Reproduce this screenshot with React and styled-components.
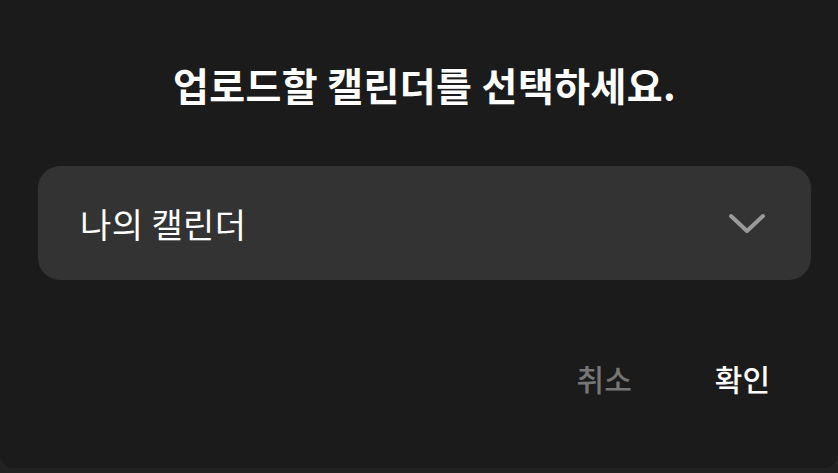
import React, { useState } from 'react'
import styled, { createGlobalStyle } from 'styled-components'

const GlobalStyle = createGlobalStyle`
  html, body { margin: 0; padding: 0; background: #222222; }
  body { font-family: "Noto Sans CJK KR", "Noto Sans", sans-serif; }
`

const Dialog = styled.div`
  height: 468px;
  box-sizing: border-box;
  background: #1b1b1b;
  border-radius: 0 0 14px 14px;
  padding: 61px 27px 0 38px;
  display: flex;
  flex-direction: column;
`

const Title = styled.h2`
  margin: 0;
  font-size: 39px;
  line-height: 46px;
  font-weight: 700;
  color: #ffffff;
  text-align: center;
  letter-spacing: 0.4px;
`

const Select = styled.button`
  margin-top: 59px;
  height: 114px;
  border: none;
  border-radius: 22px;
  background: #333333;
  display: flex;
  align-items: center;
  justify-content: space-between;
  padding: 0 44px 0 42px;
  font-family: inherit;
  font-size: 34px;
  letter-spacing: 0.4px;
  color: #ffffff;
  cursor: pointer;
`

const Actions = styled.div`
  margin-top: 78px;
  display: flex;
  justify-content: flex-end;
  gap: 43px;
  padding-right: 21px;
`

const ActionButton = styled.button`
  border: none;
  background: none;
  padding: 0 20px;
  font-family: inherit;
  font-size: 30px;
  line-height: 40px;
  font-weight: 500;
  color: ${p => (p.primary ? '#ffffff' : '#767676')};
  cursor: pointer;
`

function Chevron() {
  return (
    <svg width="40" height="24" viewBox="0 0 40 24">
      <path d="M4 5 L20 20 L36 5" fill="none" stroke="#9a9a9a" strokeWidth="4" strokeLinecap="round" strokeLinejoin="round" />
    </svg>
  )
}

export default function App() {
  const [calendar] = useState('나의 캘린더')
  return (
    <>
      <GlobalStyle />
      <Dialog>
        <Title>업로드할 캘린더를 선택하세요.</Title>
        <Select>
          <span>{calendar}</span>
          <Chevron />
        </Select>
        <Actions>
          <ActionButton>취소</ActionButton>
          <ActionButton primary>확인</ActionButton>
        </Actions>
      </Dialog>
    </>
  )
}
